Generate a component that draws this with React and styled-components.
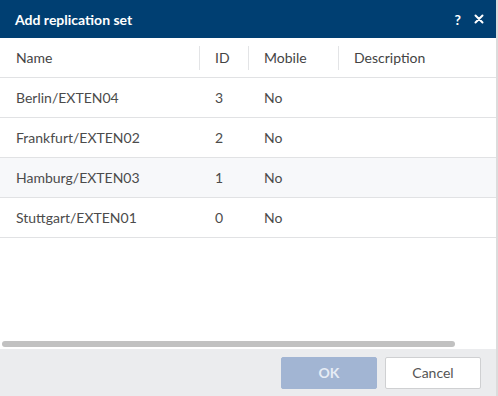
import React from "react";
import styled, { createGlobalStyle } from "styled-components";

const Global = createGlobalStyle`
  html, body { margin: 0; padding: 0; background: #ffffff; }
  body { font-family: Lato, "Liberation Sans", sans-serif; }
`;

const Dialog = styled.div`
  width: 498px;
  height: 396px;
  display: flex;
  flex-direction: column;
  box-sizing: border-box;
  border-right: 2px solid #dcdcdc;
  overflow: hidden;
`;

const TitleBar = styled.div`
  height: 38px;
  flex: none;
  background: #003f72;
  color: #ffffff;
  display: flex;
  align-items: center;
  padding: 0 12px 0 15px;
`;

const Title = styled.div`
  flex: 1;
  font-size: 14px;
  font-weight: 700;
`;

const TitleIcons = styled.div`
  display: flex;
  gap: 13px;
  align-items: center;
  font-weight: 700;
  font-size: 14px;
`;

const Body = styled.div`
  flex: 1;
  display: flex;
  flex-direction: column;
  background: #ffffff;
`;

const Table = styled.div`
  flex: 1;
`;

const Row = styled.div`
  display: grid;
  grid-template-columns: 199px 49px 90px 1fr;
  height: 39px;
  border-bottom: 1px solid #e1e2e4;
  background: ${(p) => (p.$alt ? "#f7f8fa" : "#ffffff")};
  color: ${(p) => (p.$header ? "#444444" : "#4b4b4b")};
  font-size: 14px;
`;

const Cell = styled.div`
  display: flex;
  align-items: center;
  padding-left: 16px;
  position: relative;
  ${(p) =>
    p.$sep &&
    `&::before { content: ""; position: absolute; left: 0; top: 8px; bottom: 7px; width: 1px; background: #e3e4e6; }`}
`;

const ScrollTrack = styled.div`
  height: 11px;
  flex: none;
  display: flex;
  align-items: center;
  padding: 0 2px;
`;

const ScrollThumb = styled.div`
  width: 453px;
  height: 6px;
  border-radius: 3px;
  background: #c1c1c1;
`;

const Footer = styled.div`
  height: 47px;
  flex: none;
  background: #ebecee;
  display: flex;
  justify-content: flex-end;
  align-items: center;
  gap: 8px;
  padding: 0 15px 0 0;
`;

const Button = styled.button`
  width: 96px;
  height: 32px;
  box-sizing: border-box;
  border-radius: 2px;
  font-family: inherit;
  font-size: 14px;
  border: 1px solid ${(p) => (p.$primary ? "#a2b5d3" : "#cfd0d2")};
  background: ${(p) => (p.$primary ? "#a2b5d3" : "#ffffff")};
  color: ${(p) => (p.$primary ? "#e6ecf5" : "#555555")};
  font-weight: ${(p) => (p.$primary ? 700 : 400)};
`;

const rows = [
  { name: "Berlin/EXTEN04", id: 3, mobile: "No" },
  { name: "Frankfurt/EXTEN02", id: 2, mobile: "No" },
  { name: "Hamburg/EXTEN03", id: 1, mobile: "No", alt: true },
  { name: "Stuttgart/EXTEN01", id: 0, mobile: "No" },
];

export default function App() {
  return (
    <>
      <Global />
      <Dialog>
        <TitleBar>
          <Title>Add replication set</Title>
          <TitleIcons>
            <span>?</span>
            <svg width="10" height="10" viewBox="0 0 10 10">
              <path d="M1.5 1.5 L8.5 8.5 M8.5 1.5 L1.5 8.5" stroke="#fff" strokeWidth="2" strokeLinecap="round" />
            </svg>
          </TitleIcons>
        </TitleBar>
        <Body>
          <Table>
            <Row $header>
              <Cell>Name</Cell>
              <Cell $sep>ID</Cell>
              <Cell $sep>Mobile</Cell>
              <Cell $sep>Description</Cell>
            </Row>
            {rows.map((r) => (
              <Row key={r.name} $alt={r.alt}>
                <Cell>{r.name}</Cell>
                <Cell>{r.id}</Cell>
                <Cell>{r.mobile}</Cell>
                <Cell></Cell>
              </Row>
            ))}
          </Table>
          <ScrollTrack>
            <ScrollThumb />
          </ScrollTrack>
        </Body>
        <Footer>
          <Button $primary>OK</Button>
          <Button>Cancel</Button>
        </Footer>
      </Dialog>
    </>
  );
}
